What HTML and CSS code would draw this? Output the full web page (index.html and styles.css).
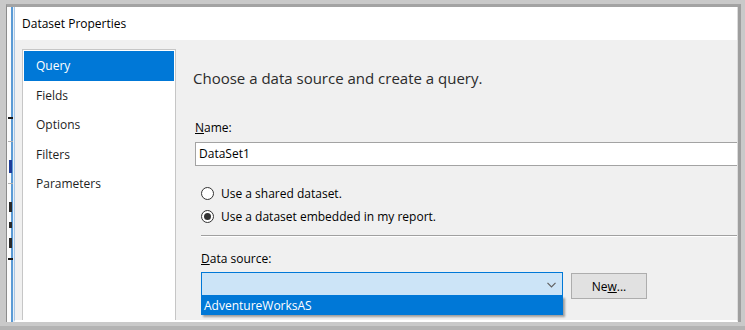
FILE: index.html
```html
<!DOCTYPE html>
<html lang="en">
<head>
  <meta charset="UTF-8">
  <title>Dataset Properties</title>
  <link rel="stylesheet" href="styles.css">
</head>
<body>

  <div class="shot">
    <div class="screen">

      <!-- edge of the report designer behind the dialog -->
      <div class="behind">
        <span class="mark dash"></span>
        <span class="mark rule"></span>
        <span class="mark glyph blue"></span>
        <span class="mark rule"></span>
        <span class="mark glyph"></span>
        <span class="mark glyph small"></span>
        <span class="mark glyph"></span>
        <span class="mark dash"></span>
      </div>

      <div class="dialog">
        <div class="titlebar">Dataset Properties</div>

        <div class="dlg-body">
          <ul class="pages">
            <li class="selected">Query</li>
            <li>Fields</li>
            <li>Options</li>
            <li>Filters</li>
            <li>Parameters</li>
          </ul>

          <div class="panel">
            <h1>Choose a data source and create a query.</h1>

            <div class="field-label name-label"><u>N</u>ame:</div>
            <div class="text-box">DataSet1</div>

            <div class="options">
              <div class="radio-row"><span class="radio"></span>Use a shared dataset.</div>
              <div class="radio-row"><span class="radio checked"></span>Use a dataset embedded in my report.</div>
            </div>

            <div class="sep"></div>

            <div class="source">
              <div class="field-label"><u>D</u>ata source:</div>
              <div class="source-row">
                <div class="combo">
                  <svg class="chevron" width="9" height="6" viewBox="0 0 9 6">
                    <path d="M0.5 0.8 L4.5 4.8 L8.5 0.8" fill="none" stroke="#606060" stroke-width="1.2"/>
                  </svg>
                  <div class="combo-list">AdventureWorksAS</div>
                </div>
                <button class="btn">Ne<u>w</u>...</button>
              </div>
            </div>
          </div>
        </div>
      </div>

    </div>
  </div>

</body>
</html>
```

FILE: styles.css
```css
* {
  margin: 0;
  padding: 0;
  box-sizing: border-box;
}

body {
  font-family: 'Open Sans', 'Noto Sans', sans-serif;
  font-size: 12px;
  color: #000;
  background-color: #c9c9c9;
}

.shot {
  width: 745px;
  height: 330px;
  padding: 4px 4px 4px 6px;
  background-color: #c9c9c9;
  border-bottom: 4px solid #b3b3b3;
}

.screen {
  display: flex;
  height: 100%;
  border-top: 3px solid #a3a3a3;
  border-left: 1px solid #8c8c8c;
  border-right: 3px solid #9e9e9e;
}

/* strip of the window underneath */
.behind {
  width: 7px;
  display: flex;
  flex-direction: column;
  align-items: flex-end;
  background-color: #fbfbfb;
  border-right: 1px solid #e8f0f8;
  box-shadow: inset -2px 0 0 #5b9bd5;
  padding-top: 110px;
}

.mark {
  display: block;
  width: 5px;
}

.mark.dash {
  height: 2px;
  background-color: #1a1a1a;
  margin-bottom: 22px;
}

.mark.rule {
  height: 1px;
  background-color: #b0b0b0;
  margin-bottom: 18px;
}

.mark.glyph {
  width: 3px;
  height: 10px;
  margin: 0 1px 10px 0;
  background-color: #2a2a2a;
}

.mark.glyph.blue {
  height: 13px;
  background-color: #1f3d9a;
}

.mark.glyph.small {
  height: 6px;
}

.dialog {
  flex: 1;
  display: flex;
  flex-direction: column;
  border-left: 1px solid #a9c6e4;
  border-right: 1px solid #dcdcdc;
  border-bottom: 2px solid #ffffff;
}

.titlebar {
  height: 33px;
  line-height: 33px;
  padding-left: 7px;
  background-color: #ffffff;
  font-size: 12px;
}

.dlg-body {
  flex: 1;
  display: flex;
  padding: 9px 0 0 7px;
  background-color: #f0f0f0;
}

.pages {
  list-style: none;
  width: 154px;
  padding: 1px;
  background-color: #ffffff;
  border: 1px solid #c6c6c6;
  border-bottom: none;
}

.pages li {
  height: 29.5px;
  line-height: 29.5px;
  padding-left: 12px;
  color: #1e1e1e;
}

.pages li.selected {
  background-color: #0078d7;
  color: #ffffff;
}

.panel {
  flex: 1;
  min-width: 0;
  display: flex;
  flex-direction: column;
  margin-left: 17px;
}

.panel h1 {
  font-size: 15px;
  font-weight: normal;
  line-height: 20px;
  margin-top: 19px;
  color: #2b2b2b;
}

.field-label {
  line-height: 16px;
}

.name-label {
  margin-top: 32px;
  padding-left: 2px;
}

.text-box {
  margin: 6px 0 0 2px;
  height: 24px;
  line-height: 22px;
  padding-left: 3px;
  background-color: #ffffff;
  border: 1px solid #a3a3a3;
  border-right: none;
}

.options {
  display: flex;
  flex-direction: column;
  gap: 7px;
  margin-top: 19px;
  padding-left: 8px;
}

.radio-row {
  display: flex;
  align-items: center;
  gap: 7px;
  height: 16px;
}

.radio {
  width: 13px;
  height: 13px;
  border: 1px solid #333333;
  border-radius: 50%;
  background-color: #ffffff;
  display: flex;
  align-items: center;
  justify-content: center;
}

.radio.checked::after {
  content: '';
  width: 7px;
  height: 7px;
  border-radius: 50%;
  background-color: #333333;
}

.sep {
  margin: 11px 0 0 8px;
  border-top: 1px solid #a0a0a0;
  border-bottom: 1px solid #ffffff;
}

.source {
  margin-top: 14px;
  padding-left: 8px;
}

.source-row {
  display: flex;
  align-items: flex-start;
  margin-top: 5px;
}

.combo {
  position: relative;
  width: 362px;
  height: 24px;
  border: 1px solid #0078d7;
  background-color: #cce4f7;
}

.chevron {
  position: absolute;
  right: 6px;
  top: 9px;
}

.combo-list {
  position: absolute;
  top: 23px;
  left: -1px;
  width: 362px;
  height: 19px;
  line-height: 19px;
  padding-left: 3px;
  background-color: #0078d7;
  color: #ffffff;
  box-shadow: 2px 2px 2px rgba(0, 0, 0, 0.35);
}

.btn {
  margin: 1px 0 0 8px;
  width: 76px;
  height: 26px;
  font-family: inherit;
  font-size: 12px;
  color: #000;
  background-color: #e1e1e1;
  border: 1px solid #adadad;
}
```
